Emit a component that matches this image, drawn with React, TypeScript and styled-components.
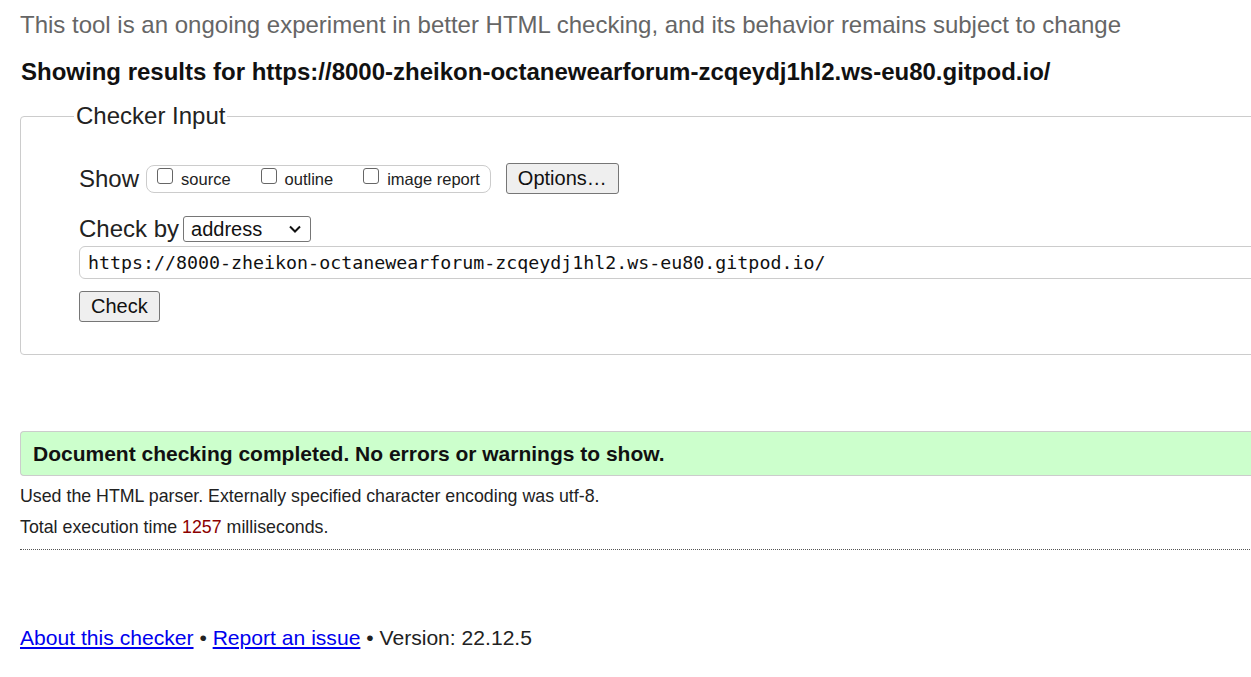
import React from "react";
import styled, { createGlobalStyle } from "styled-components";

const Global = createGlobalStyle`
  html, body { margin: 0; padding: 0; overflow: hidden; background: #fff; }
  body { font-family: "Liberation Sans", Arial, sans-serif; color: #222; }
`;

const Page = styled.div`
  width: 1400px;
  padding: 0 0 0 20px;
  box-sizing: border-box;
`;

const Intro = styled.p`
  margin: 0;
  padding-top: 11px;
  font-size: 24px;
  line-height: 28px;
  color: #666;
  white-space: nowrap;
`;

const Heading = styled.h2`
  margin: 19px 0 0 1px;
  font-size: 24px;
  line-height: 28px;
  font-weight: bold;
  color: #111;
  white-space: nowrap;
`;

const Fieldset = styled.fieldset`
  margin: 16px 0 0 0;
  padding: 0 0 32px 53px;
  border: 1px solid #ccc;
  border-radius: 4px;
  min-inline-size: auto;
`;

const Legend = styled.legend`
  padding: 0 2px;
  font-size: 24px;
  line-height: 28px;
  color: #222;
`;

const Body = styled.div`
  padding-left: 5px;
`;

const Row = styled.div<{ $h: number; $top: number }>`
  display: flex;
  align-items: center;
  height: ${(p) => p.$h}px;
  margin-top: ${(p) => p.$top}px;
`;

const Label = styled.span<{ $gap: number }>`
  font-size: 24px;
  color: #222;
  margin-right: ${(p) => p.$gap}px;
`;

const CheckGroup = styled.div`
  display: flex;
  align-items: center;
  height: 28px;
  box-sizing: border-box;
  padding: 0 10px 0 10px;
  border: 1px solid #ccc;
  border-radius: 8px;
  gap: 30px;
  margin-right: 15px;
`;

const CheckLabel = styled.label`
  display: flex;
  align-items: center;
  font-size: 16.5px;
  color: #222;
  gap: 8px;
  padding-top: 2px;
`;

const Box = styled.span`
  width: 16px;
  height: 16px;
  border: 1px solid #666;
  border-radius: 3px;
  box-sizing: border-box;
  position: relative;
  top: -4px;
`;

const Button = styled.button`
  font-family: "Liberation Sans", Arial, sans-serif;
  font-size: 20px;
  color: #111;
  background: #efefef;
  border: 1px solid #767676;
  border-radius: 3px;
  height: 31px;
  padding: 0 11px;
  box-sizing: border-box;
`;

const Select = styled.div`
  display: flex;
  align-items: center;
  justify-content: space-between;
  width: 128px;
  height: 26px;
  box-sizing: border-box;
  border: 1px solid #767676;
  border-radius: 3px;
  padding: 0 8px 0 7px;
  font-size: 20px;
  color: #111;
`;

const UrlInput = styled.div`
  margin-top: 4px;
  width: 1400px;
  height: 33px;
  box-sizing: border-box;
  border: 1px solid #ccc;
  border-radius: 6px;
  display: flex;
  align-items: center;
  padding-left: 8px;
  font-family: "DejaVu Sans Mono", monospace;
  font-size: 18.3px;
  color: #111;
  white-space: nowrap;
`;

const Success = styled.div`
  margin-top: 76px;
  height: 45px;
  box-sizing: border-box;
  background: #ccffcc;
  border: 1px solid #ccc;
  border-right: none;
  border-radius: 4px 0 0 4px;
  display: flex;
  align-items: center;
  padding-left: 12px;
  font-size: 21px;
  font-weight: bold;
  color: #111;
`;

const Info = styled.p`
  margin: 0;
  font-size: 17.8px;
  line-height: 31px;
  color: #222;
`;

const Num = styled.span`
  color: #8b0000;
`;

const Rule = styled.hr`
  margin: 6px 0 0 0;
  border: none;
  border-top: 1px dotted #555;
`;

const Footer = styled.p`
  margin: 76px 0 0 0;
  font-size: 21.1px;
  color: #222;
`;

const Link = styled.a`
  color: #0000ee;
  text-decoration: underline;
`;

export default function App() {
  return (
    <Page>
      <Global />
      <Intro>This tool is an ongoing experiment in better HTML checking, and its behavior remains subject to change</Intro>
      <Heading>Showing results for https://8000-zheikon-octanewearforum-zcqeydj1hl2.ws-eu80.gitpod.io/</Heading>
      <Fieldset>
        <Legend>Checker Input</Legend>
        <Body>
          <Row $h={31} $top={33}>
            <Label $gap={7}>Show</Label>
            <CheckGroup>
              <CheckLabel><Box />source</CheckLabel>
              <CheckLabel><Box />outline</CheckLabel>
              <CheckLabel><Box />image report</CheckLabel>
            </CheckGroup>
            <Button>Options…</Button>
          </Row>
          <Row $h={26} $top={22}>
            <Label $gap={4}>Check by</Label>
            <Select>
              <span>address</span>
              <svg width="14" height="10" viewBox="0 0 14 10"><path d="M2 2.5 L7 7.5 L12 2.5" fill="none" stroke="#111" strokeWidth="2" /></svg>
            </Select>
          </Row>
          <UrlInput>https://8000-zheikon-octanewearforum-zcqeydj1hl2.ws-eu80.gitpod.io/</UrlInput>
          <Row $h={31} $top={12}>
            <Button>Check</Button>
          </Row>
        </Body>
      </Fieldset>
      <Success>Document checking completed. No errors or warnings to show.</Success>
      <Info style={{ marginTop: 5 }}>Used the HTML parser. Externally specified character encoding was utf-8.</Info>
      <Info>Total execution time <Num>1257</Num> milliseconds.</Info>
      <Rule />
      <Footer>
        <Link href="#">About this checker</Link> • <Link href="#">Report an issue</Link> • Version: 22.12.5
      </Footer>
    </Page>
  );
}
